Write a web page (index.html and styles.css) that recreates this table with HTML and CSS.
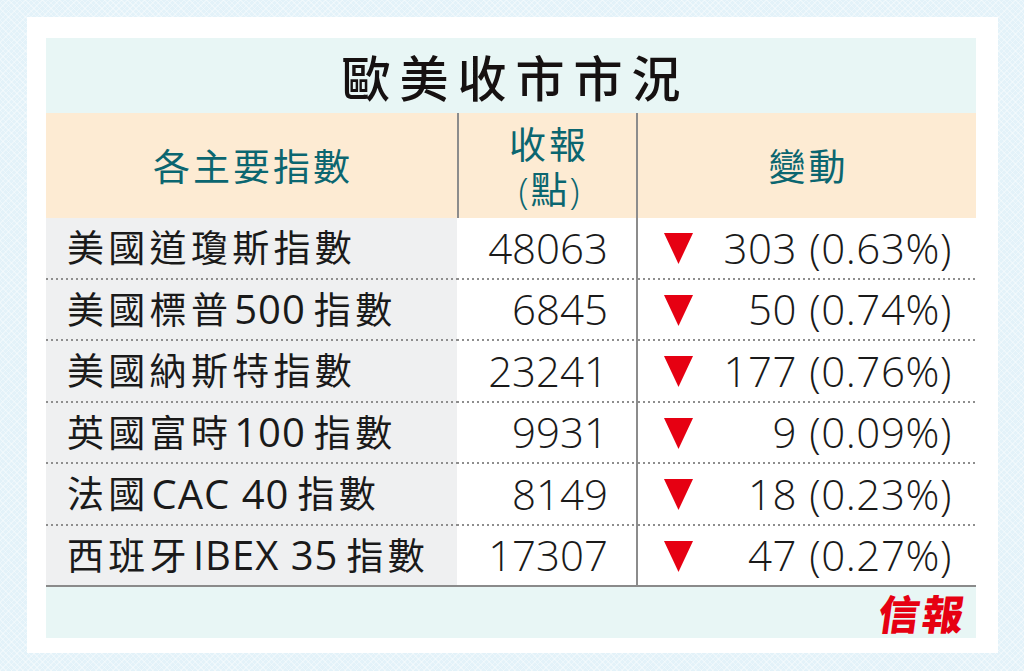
FILE: index.html
```html
<!DOCTYPE html>
<html lang="zh-Hant">
<head>
<meta charset="utf-8">
<title>歐美收市市況</title>
<link rel="stylesheet" href="styles.css">
</head>
<body>
<div class="card">
  <div class="table">
    <div class="title">歐美收市市況</div>
    <div class="head">
      <div class="hcell">各主要指數</div>
      <div class="hcell sep"><span class="line">收報</span><span class="line sub"><span class="par">(</span>點<span class="par">)</span></span></div>
      <div class="hcell sep">變動</div>
    </div>
    <div class="row">
      <div class="name">美國道瓊斯指數</div>
      <div class="num">48063</div>
      <div class="chg"><svg class="tri" viewBox="0 0 29 31" width="29" height="31"><polygon points="0,0 29,0 14.5,31" fill="#e60012"/></svg><span class="val">303<span class="pct">(0.63%)</span></span></div>
    </div>
    <div class="row">
      <div class="name">美國標普<span class="lat">500</span>指數</div>
      <div class="num">6845</div>
      <div class="chg"><svg class="tri" viewBox="0 0 29 31" width="29" height="31"><polygon points="0,0 29,0 14.5,31" fill="#e60012"/></svg><span class="val">50<span class="pct">(0.74%)</span></span></div>
    </div>
    <div class="row">
      <div class="name">美國納斯特指數</div>
      <div class="num">23241</div>
      <div class="chg"><svg class="tri" viewBox="0 0 29 31" width="29" height="31"><polygon points="0,0 29,0 14.5,31" fill="#e60012"/></svg><span class="val">177<span class="pct">(0.76%)</span></span></div>
    </div>
    <div class="row">
      <div class="name">英國富時<span class="lat">100</span>指數</div>
      <div class="num">9931</div>
      <div class="chg"><svg class="tri" viewBox="0 0 29 31" width="29" height="31"><polygon points="0,0 29,0 14.5,31" fill="#e60012"/></svg><span class="val">9<span class="pct">(0.09%)</span></span></div>
    </div>
    <div class="row">
      <div class="name">法國<span class="lat">CAC 40</span>指數</div>
      <div class="num">8149</div>
      <div class="chg"><svg class="tri" viewBox="0 0 29 31" width="29" height="31"><polygon points="0,0 29,0 14.5,31" fill="#e60012"/></svg><span class="val">18<span class="pct">(0.23%)</span></span></div>
    </div>
    <div class="row last">
      <div class="name">西班牙<span class="lat">IBEX 35</span>指數</div>
      <div class="num">17307</div>
      <div class="chg"><svg class="tri" viewBox="0 0 29 31" width="29" height="31"><polygon points="0,0 29,0 14.5,31" fill="#e60012"/></svg><span class="val">47<span class="pct">(0.27%)</span></span></div>
    </div>
    <div class="foot"><span class="logo">信報</span></div>
  </div>
</div>
</body>
</html>
```

FILE: styles.css
```css
* { box-sizing: border-box; }

html, body {
  margin: 0;
  height: 100%;
}

body {
  background-color: #e3f2f9;
  background-image:
    repeating-linear-gradient(45deg, rgba(255,255,255,0.35) 0 1px, transparent 1px 4px),
    repeating-linear-gradient(-45deg, rgba(255,255,255,0.35) 0 1px, transparent 1px 4px);
  padding: 17px 0 0 27px;
  font-family: "Noto Sans CJK TC", sans-serif;
  color: #1a1a1a;
}

.card {
  width: 971px;
  height: 636px;
  background: #ffffff;
  padding: 21px 22px 15px 19px;
}

.table {
  width: 930px;
  display: flex;
  flex-direction: column;
}

.title {
  height: 75px;
  background: #e8f6f5;
  display: flex;
  align-items: center;
  justify-content: center;
  font-size: 49px;
  font-weight: 500;
  letter-spacing: 9px;
  padding-left: 9px;
  color: #161111;
  line-height: 1;
}

.head {
  height: 105px;
  display: grid;
  grid-template-columns: 411px 179px 340px;
  background: #fdebd3;
}

.hcell {
  display: flex;
  flex-direction: column;
  align-items: center;
  justify-content: center;
  color: #0b6670;
  font-size: 37px;
  font-weight: 400;
  letter-spacing: 3px;
  padding-left: 3px;
  line-height: 45px;
}

.hcell.sep {
  border-left: 2px solid #8c8c8c;
}

.hcell .line {
  display: block;
  height: 45px;
}

.hcell .sub {
  letter-spacing: 0;
  padding-left: 0;
}

.hcell .par {
  font-family: "Open Sans", sans-serif;
  font-weight: 300;
  padding: 0 2px;
}

.row {
  height: 61.5px;
  display: grid;
  grid-template-columns: 411px 179px 340px;
}

.row > div {
  display: flex;
  align-items: center;
  background-image: linear-gradient(to right, #8e8e8e 2px, transparent 2px);
  background-size: 5px 2px;
  background-repeat: repeat-x;
  background-position: left bottom;
  background-color: #ffffff;
  padding-bottom: 2px;
}

.row.last > div {
  background-image: none;
  border-bottom: 2px solid #8a8a8a;
  padding-bottom: 0;
}

.row .name {
  background-color: #eff0f1;
  padding-left: 21px;
  font-family: "Open Sans", "Noto Sans CJK TC", sans-serif;
  font-size: 37px;
  letter-spacing: 4.3px;
  line-height: 1;
  white-space: nowrap;
}

.row .name .lat {
  font-family: "Open Sans", sans-serif;
  font-weight: 400;
  font-size: 40px;
  letter-spacing: 1px;
  margin: 0 8px 0 2px;
}

.row .num {
  justify-content: flex-end;
  padding-right: 28px;
  font-family: "Open Sans", sans-serif;
  font-weight: 300;
  font-size: 42px;
  line-height: 1;
}

.row .chg {
  border-left: 2px solid #8c8c8c;
  padding-left: 26px;
  padding-right: 24px;
  font-family: "Open Sans", sans-serif;
  font-weight: 300;
  font-size: 42px;
  letter-spacing: 0.6px;
  line-height: 1;
}

.row .tri {
  display: block;
  flex: none;
  margin-top: 2px;
}

.row .val {
  margin-left: auto;
}

.row .pct {
  margin-left: 12px;
}

.foot {
  height: 51px;
  background: #e8f6f5;
  display: flex;
  align-items: center;
  justify-content: flex-end;
  padding-right: 9px;
}

.logo {
  font-family: "Noto Sans CJK TC", sans-serif;
  font-weight: 900;
  font-size: 41px;
  line-height: 1;
  color: #e60012;
  letter-spacing: 3px;
  transform: skewX(-8deg);
  display: inline-block;
}
```
